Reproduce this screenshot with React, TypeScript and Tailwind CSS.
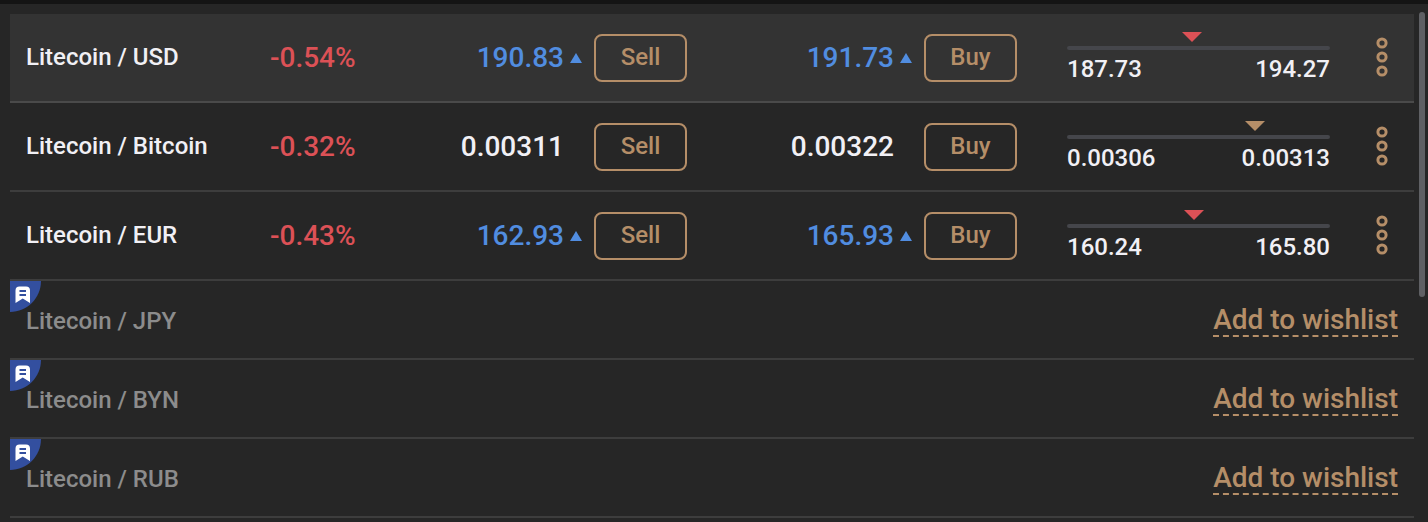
interface Quote {
  price: string
  trend?: 'up'
}

interface Pair {
  name: string
  change: string
  sell: Quote
  buy: Quote
  low: string
  high: string
  markerColor: string
  active?: boolean
}

const pairs: Pair[] = [
  {
    name: 'Litecoin / USD',
    change: '-0.54%',
    sell: { price: '190.83', trend: 'up' },
    buy: { price: '191.73', trend: 'up' },
    low: '187.73',
    high: '194.27',
    markerColor: 'text-[#dc5156]',
    active: true,
  },
  {
    name: 'Litecoin / Bitcoin',
    change: '-0.32%',
    sell: { price: '0.00311' },
    buy: { price: '0.00322' },
    low: '0.00306',
    high: '0.00313',
    markerColor: 'text-[#b58e68]',
  },
  {
    name: 'Litecoin / EUR',
    change: '-0.43%',
    sell: { price: '162.93', trend: 'up' },
    buy: { price: '165.93', trend: 'up' },
    low: '160.24',
    high: '165.80',
    markerColor: 'text-[#dc5156]',
  },
]

const suggestions = ['Litecoin / JPY', 'Litecoin / BYN', 'Litecoin / RUB']

const QuoteCell = ({ quote, action }: { quote: Quote; action: string }) => (
  <div className="flex items-center justify-end gap-3">
    <div className={`flex items-center gap-1.5 text-[28px] leading-8 ${quote.trend ? 'text-[#518de0]' : 'text-[#f1f0f5]'}`}>
      <span>{quote.price}</span>
      <svg className="h-2.5 w-3" viewBox="0 0 12 10" aria-hidden="true">
        {quote.trend && <path d="M6 0L12 10H0Z" fill="currentColor" />}
      </svg>
    </div>
    <button type="button" className="h-12 w-[93px] rounded-lg border-2 border-[#b58e68] pb-0.5 text-2xl leading-7 text-[#b58e68]">
      {action}
    </button>
  </div>
)

const RangeCell = ({ pair }: { pair: Pair }) => {
  const low = Number(pair.low)
  const high = Number(pair.high)
  const position = ((Number(pair.sell.price) - low) / (high - low)) * 100

  return (
    <div className="flex flex-col gap-[5px]">
      <div className="flex flex-col gap-1">
        <div className="relative h-2.5">
          <svg
            className={`absolute h-2.5 w-5 -translate-x-1/2 ${pair.markerColor}`}
            style={{ left: `${position}%` }}
            viewBox="0 0 20 10"
            aria-hidden="true"
          >
            <path d="M0 0H20L10 10Z" fill="currentColor" />
          </svg>
        </div>
        <div className="h-1 rounded-full bg-[#45464b]" />
      </div>
      <div className="flex justify-between text-2xl leading-7">
        <span>{pair.low}</span>
        <span>{pair.high}</span>
      </div>
    </div>
  )
}

const PairRow = ({ pair }: { pair: Pair }) => {
  const border = pair.active ? 'border-b-2 border-[#4a4a4a]' : 'border-b-2 border-[#3d3d3d]'

  return (
    <tr className={`h-[89px] ${pair.active ? 'bg-[#333333]' : ''}`}>
      <td className={`pb-0.5 pl-4 ${border}`}>{pair.name}</td>
      <td className={`pl-4 text-[28px] leading-8 text-[#dc5156] ${border}`}>{pair.change}</td>
      <td className={`pr-4 ${border}`}>
        <QuoteCell quote={pair.sell} action="Sell" />
      </td>
      <td className={`pr-4 ${border}`}>
        <QuoteCell quote={pair.buy} action="Buy" />
      </td>
      <td className={`pr-4 pl-[34px] ${border}`}>
        <RangeCell pair={pair} />
      </td>
      <td className={`pb-0.5 pl-1 text-center ${border}`}>
        <button type="button" aria-label={`${pair.name} options`} className="align-middle text-[#b58e68]">
          <svg className="h-10 w-3" viewBox="0 0 12 40" fill="none" stroke="currentColor" strokeWidth="3">
            <circle cx="6" cy="6" r="4.1" />
            <circle cx="6" cy="20" r="4.1" />
            <circle cx="6" cy="34" r="4.1" />
          </svg>
        </button>
      </td>
    </tr>
  )
}

const SuggestionRow = ({ name }: { name: string }) => (
  <tr className="h-[79px]">
    <td colSpan={2} className="relative border-b-2 border-[#3d3d3d] pt-0.5 pl-4 text-[#8c8c8c]">
      <svg className="absolute top-0 left-0 size-8" viewBox="0 0 32 32" aria-hidden="true">
        <path d="M0 0H31C31 17 17 31 0 31Z" fill="#334f9f" />
        <path d="M5.5 22V9.5Q5.500 5.500 9.500 5.500H16Q20 5.500 20 9.500V22L12.750 17.500Z" fill="#fff" />
        <path d="M9.500 10H16M9.500 14H16" stroke="#334f9f" strokeWidth="1.800" />
      </svg>
      {name}
    </td>
    <td colSpan={4} className="border-b-2 border-[#3d3d3d] pr-4 text-right">
      <a href="#wishlist" className="inline-block border-b-2 border-dashed border-[#b58e68] pt-0.5 text-[28px] leading-[30px] text-[#b58e68]">
        Add to wishlist
      </a>
    </td>
  </tr>
)

export default function App() {
  return (
    <main className="flex min-h-screen items-start gap-[5px] border-t-4 border-[#141414] bg-[#262626] pr-[3px] pl-2.5 font-['Roboto',sans-serif] text-2xl leading-7 font-medium text-[#f1f0f5]">
      <table className="mt-2.5 flex-1 table-fixed border-separate border-spacing-0">
        <colgroup>
          <col />
          <col className="w-[118px]" />
          <col className="w-[331px]" />
          <col className="w-[330px]" />
          <col className="w-[313px]" />
          <col className="w-[68px]" />
        </colgroup>
        <tbody>
          {pairs.map((pair) => (
            <PairRow key={pair.name} pair={pair} />
          ))}
          {suggestions.map((name) => (
            <SuggestionRow key={name} name={name} />
          ))}
        </tbody>
      </table>
      <div className="mt-2 h-[285px] w-1.5 rounded-full bg-[#5f6064]" />
    </main>
  )
}
